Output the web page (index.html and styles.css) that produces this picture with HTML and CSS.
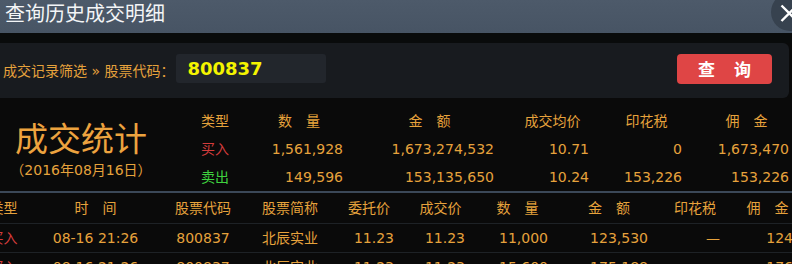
FILE: index.html
```html
<!DOCTYPE html>
<html lang="zh-CN">
<head>
<meta charset="utf-8">
<title>查询历史成交明细</title>
<link rel="stylesheet" href="styles.css">
</head>
<body>
<div class="dialog">
  <header class="titlebar">
    <h1 class="title">查询历史成交明细</h1>
    <button class="close" type="button" aria-label="关闭">
      <svg viewBox="0 0 38 38" width="38" height="38"><path d="M10.5 12.5 L26 28 M26 12.5 L10.5 28"/></svg>
    </button>
  </header>
  <div class="gap"></div>
  <form class="filter">
    <span class="filter-label">成交记录筛选 » 股票代码：</span>
    <input class="code-input" type="text" value="800837">
    <button class="query-btn" type="button"><span>查</span><span>询</span></button>
  </form>
  <section class="stats">
    <div class="stats-head">
      <div class="stats-title">成交统计</div>
      <div class="stats-date">（2016年08月16日）</div>
    </div>
    <table class="stats-table">
      <colgroup>
        <col class="sc1"><col class="sc2"><col class="sc3"><col class="sc4"><col class="sc5"><col class="sc6">
      </colgroup>
      <tr><th>类型</th><th>数　量</th><th>金　额</th><th>成交均价</th><th>印花税</th><th>佣　金</th></tr>
      <tr><td class="buy">买入</td><td class="num">1,561,928</td><td class="num">1,673,274,532</td><td class="num">10.71</td><td class="num">0</td><td class="num">1,673,470</td></tr>
      <tr><td class="sell">卖出</td><td class="num">149,596</td><td class="num">153,135,650</td><td class="num">10.24</td><td class="num">153,226</td><td class="num">153,226</td></tr>
    </table>
  </section>
  <div class="detail-wrap">
    <table class="detail-table">
      <colgroup>
        <col class="dc1"><col class="dc2"><col class="dc3"><col class="dc4"><col class="dc5"><col class="dc6"><col class="dc7"><col class="dc8"><col class="dc9"><col class="dc10">
      </colgroup>
      <tr class="head"><th>类型</th><th>时　间</th><th>股票代码</th><th>股票简称</th><th>委托价</th><th>成交价</th><th>数　量</th><th>金　额</th><th>印花税</th><th>佣　金</th></tr>
      <tr><td class="buy">买入</td><td>08-16 21:26</td><td>800837</td><td>北辰实业</td><td class="num">11.23</td><td class="num">11.23</td><td class="num">11,000</td><td class="num">123,530</td><td class="num">—</td><td class="num">124</td></tr>
      <tr><td class="buy">买入</td><td>08-16 21:26</td><td>800837</td><td>北辰实业</td><td class="num">11.23</td><td class="num">11.23</td><td class="num">15,600</td><td class="num">175,188</td><td class="num">—</td><td class="num">176</td></tr>
    </table>
  </div>
</div>
</body>
</html>
```
FILE: styles.css
```css
* { box-sizing: border-box; margin: 0; padding: 0; }
html, body { width: 792px; height: 264px; overflow: hidden; }
body {
  background: #0a0a0a;
  color: #e6a23c;
  font-family: "DejaVu Sans", "Noto Sans CJK SC", sans-serif;
  font-size: 14px;
}
.dialog { width: 792px; }

.titlebar {
  position: relative;
  height: 33px;
  background: linear-gradient(#4d5a6a, #475464);
}
.title {
  font: 400 20px/26px "Noto Sans CJK SC", sans-serif;
  color: #f3f5f7;
  padding-left: 5px;
}
.close {
  position: absolute;
  top: -7px;
  right: -17px;
  width: 38px;
  height: 38px;
  border: 0;
  border-radius: 50%;
  background: #37424f;
}
.close svg { display: block; }
.close path { stroke: #ffffff; stroke-width: 2.4; fill: none; }

.gap { height: 10px; background: #090b0b; }

.filter {
  display: flex;
  align-items: flex-start;
  width: 789px;
  height: 55px;
  padding: 11px 17px 0 3px;
  background: #181b1f;
  border-radius: 0 6px 6px 0;
}
.filter-label {
  flex-shrink: 0;
  line-height: 30px;
  padding-top: 2px;
  color: #e6a23c;
}
.code-input {
  flex-shrink: 0;
  width: 150px;
  height: 29px;
  margin-left: 2px;
  padding-left: 11px;
  border: 0;
  border-radius: 3px;
  background: #22262c;
  color: #f4f400;
  font: 700 18px/29px "DejaVu Sans", sans-serif;
  outline: none;
}
.query-btn {
  flex-shrink: 0;
  display: flex;
  justify-content: center;
  align-items: center;
  gap: 19px;
  margin-left: auto;
  width: 95px;
  height: 30px;
  border: 0;
  border-radius: 4px;
  background: #df4545;
  color: #ffffff;
  font: 700 17px/30px "Noto Sans CJK SC", sans-serif;
}

.stats {
  display: flex;
  align-items: flex-start;
  height: 95px;
  padding-top: 9px;
  border-bottom: 2px solid #3b4858;
}
.stats-head {
  flex: 0 0 162px;
  padding-top: 14px;
  text-align: center;
}
.stats-title {
  font-family: "Noto Sans CJK SC", sans-serif;
  font-size: 33px;
  line-height: 33px;
  color: #eda33f;
}
.stats-date { font-size: 14px; line-height: 18px; margin-top: 7px; }

table { border-collapse: collapse; table-layout: fixed; }
th, td {
  font-weight: 400;
  white-space: nowrap;
  overflow: hidden;
  text-align: center;
  line-height: 20px;
  vertical-align: middle;
}
td.num { text-align: right; padding-right: 11px; }
.buy { color: #d43c3c; }
.sell { color: #3fd23f; }

.stats-table { flex: 0 0 614px; width: 614px; margin-left: 24px; }
.stats-table tr { height: 28px; }
.sc1 { width: 58px; } .sc2 { width: 110px; } .sc3 { width: 151px; }
.sc4 { width: 95px; } .sc5 { width: 93px; } .sc6 { width: 107px; }

.detail-wrap { width: 792px; overflow: hidden; }
.detail-table { width: 829px; margin-left: -25px; }
.detail-table tr { height: 29px; border-bottom: 1px solid #1e2226; }
.detail-table tr.head { height: 30px; }
.dc1 { width: 57px; } .dc2 { width: 127px; } .dc3 { width: 88px; } .dc4 { width: 86px; }
.dc5 { width: 72px; } .dc6 { width: 71px; } .dc7 { width: 83px; } .dc8 { width: 100px; }
.dc9 { width: 72px; } .dc10 { width: 73px; }
```
